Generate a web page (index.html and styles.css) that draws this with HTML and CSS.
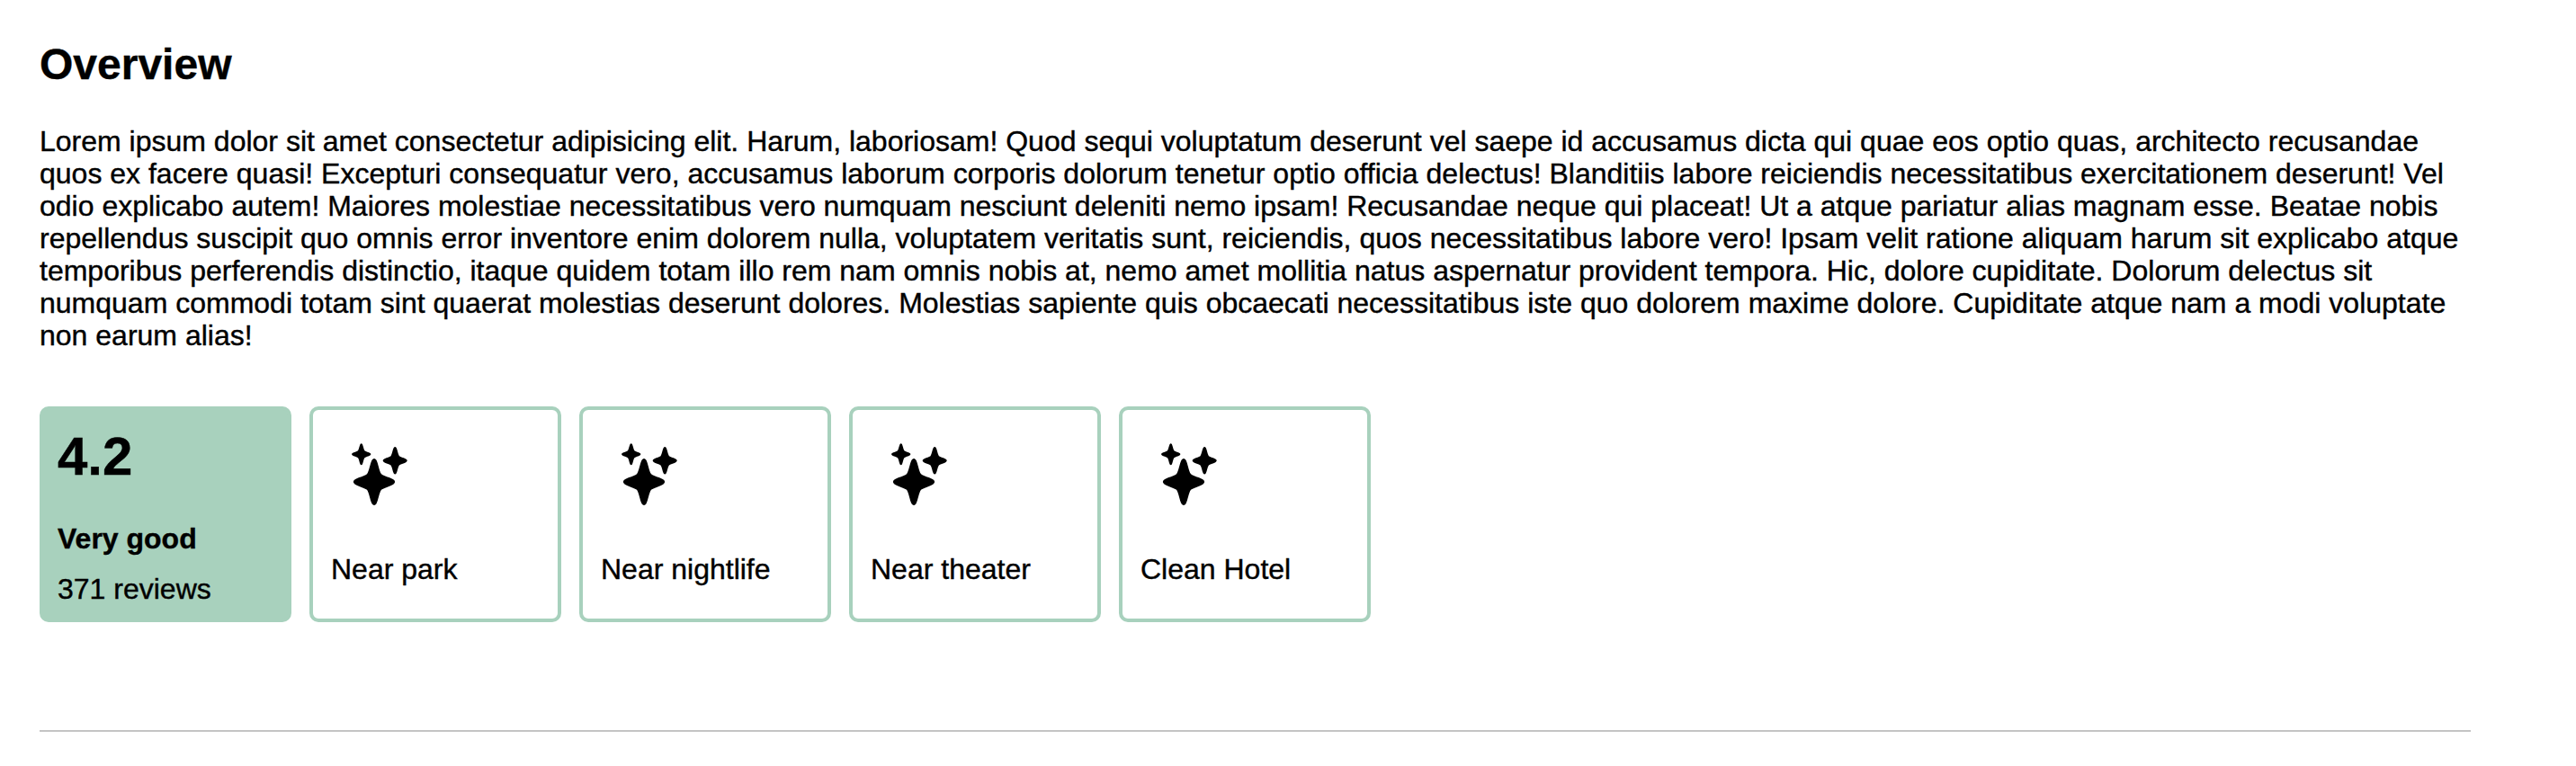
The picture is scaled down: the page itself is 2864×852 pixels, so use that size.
FILE: index.html
```
<!DOCTYPE html>
<html lang="en">
<head>
<meta charset="utf-8">
<title>Overview</title>
<link rel="stylesheet" href="styles.css">
</head>
<body>
<svg class="defs" width="0" height="0" aria-hidden="true">
  <symbol id="sparkles" viewBox="0 0 96 96">
    <g transform="translate(48 56)">
      <path id="star" d="M-2.5-24.3Q0-27.6 2.5-24.3C4.6-20.3 5.4-12.5 8-8.8C11.5-6.3 18-5 21.3-2.7Q25 0 21.3 2.7C18 5 11.5 6.3 8 8.8C5.4 12.5 4.6 20.3 2.5 24.3Q0 27.6-2.5 24.3C-4.6 20.3-5.4 12.5-8 8.8C-11.5 6.3-18 5-21.3 2.7Q-25 0-21.3-2.7C-18-5-11.5-6.3-8-8.8C-5.4-12.5-4.6-20.3-2.5-24.3Z"/>
    </g>
    <use href="#star" transform="translate(71.2 32.3) scale(.585)"/>
    <use href="#star" transform="translate(33.7 25.2) scale(.46)"/>
  </symbol>
</svg>
<section class="overview">
  <h2 class="title">Overview</h2>
  <p class="description">Lorem ipsum dolor sit amet consectetur adipisicing elit. Harum, laboriosam! Quod sequi voluptatum deserunt vel saepe id accusamus dicta qui quae eos optio quas, architecto recusandae<br>
quos ex facere quasi! Excepturi consequatur vero, accusamus laborum corporis dolorum tenetur optio officia delectus! Blanditiis labore reiciendis necessitatibus exercitationem deserunt! Vel<br>
odio explicabo autem! Maiores molestiae necessitatibus vero numquam nesciunt deleniti nemo ipsam! Recusandae neque qui placeat! Ut a atque pariatur alias magnam esse. Beatae nobis<br>
repellendus suscipit quo omnis error inventore enim dolorem nulla, voluptatem veritatis sunt, reiciendis, quos necessitatibus labore vero! Ipsam velit ratione aliquam harum sit explicabo atque<br>
temporibus perferendis distinctio, itaque quidem totam illo rem nam omnis nobis at, nemo amet mollitia natus aspernatur provident tempora. Hic, dolore cupiditate. Dolorum delectus sit<br>
numquam commodi totam sint quaerat molestias deserunt dolores. Molestias sapiente quis obcaecati necessitatibus iste quo dolorem maxime dolore. Cupiditate atque nam a modi voluptate<br>
non earum alias!</p>
  <div class="cards">
    <div class="card rating">
      <div class="score">4.2</div>
      <div class="verdict">Very good</div>
      <div class="reviews">371 reviews</div>
    </div>
    <div class="card"><svg class="icon"><use href="#sparkles"/></svg><div class="label">Near park</div></div>
    <div class="card"><svg class="icon"><use href="#sparkles"/></svg><div class="label">Near nightlife</div></div>
    <div class="card"><svg class="icon"><use href="#sparkles"/></svg><div class="label">Near theater</div></div>
    <div class="card"><svg class="icon"><use href="#sparkles"/></svg><div class="label">Clean Hotel</div></div>
  </div>
  <hr class="divider">
</section>
</body>
</html>
```

FILE: styles.css
```
* {
  box-sizing: border-box;
}

body {
  margin: 0;
  background: #fff;
  color: #000;
  font-family: "Liberation Sans", Arial, sans-serif;
  font-size: 32px;
  line-height: 36px;
  -webkit-text-stroke: 0.4px #000;
}

.defs {
  display: block;
}

.overview {
  width: 2747px;
  padding: 45px 0 0 44px;
}

.title {
  margin: 0;
  font-size: 48px;
  line-height: 54px;
}

.description {
  margin: 40px 0 0;
  white-space: nowrap;
}

.cards {
  display: flex;
  gap: 20px;
  margin-top: 61px;
}

.card {
  width: 280px;
  height: 240px;
  padding: 24px 20px;
  border: 4px solid #a8d1bd;
  border-radius: 10px;
}

.rating {
  padding: 18px 16px;
  background: #a8d1bd;
}

.score {
  font-size: 60px;
  font-weight: 700;
  line-height: 68px;
}

.verdict {
  margin-top: 39px;
  font-weight: 700;
}

.reviews {
  margin-top: 20px;
}

.icon {
  display: block;
  width: 96px;
  height: 96px;
  stroke: none;
}

.label {
  margin-top: 39px;
}

.divider {
  height: 2px;
  margin: 120px 0 0;
  border: 0;
  background: #c4c4c4;
}
```
